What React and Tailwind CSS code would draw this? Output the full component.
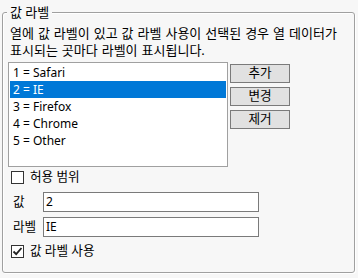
import React from "react";

const F = { fontFamily: '"Noto Sans", "Noto Sans CJK KR", sans-serif' };

function Check({ checked }) {
  return (
    <div className="w-[13px] h-[13px] border border-[#333333] bg-white flex items-center justify-center shrink-0">
      {checked && (
        <svg width="11" height="11" viewBox="0 0 11 11">
          <path d="M1.5 5.5 L4.2 8.2 L9.5 2" fill="none" stroke="#222" strokeWidth="1.8" />
        </svg>
      )}
    </div>
  );
}

export default function App() {
  const items = ["1 = Safari", "2 = IE", "3 = Firefox", "4 = Chrome", "5 = Other"];
  return (
    <div className="w-[358px] h-[278px] bg-[#f7f7f7] text-[12px] text-black overflow-hidden pt-[12px] pl-[2px]" style={F}>
      <div className="relative w-[353px] h-[261px] border border-[#a0a0a0] rounded-[3px] shadow-[inset_1px_1px_0_#ffffff,1px_1px_0_#ffffff]">
        <div className="absolute left-[4px] top-[-10px] px-[3px] bg-[#f7f7f7] leading-[18px] text-[13px]">값 라벨</div>
        <div className="flex flex-col">
          <div className="pl-[7px] mt-[12px] leading-[17px] text-[13px] [word-spacing:0.6px]">
            <div className="whitespace-nowrap">열에 값 라벨이 있고 값 라벨 사용이 선택된 경우 열 데이터가</div>
            <div>표시되는 곳마다 라벨이 표시됩니다.</div>
          </div>
          <div className="flex mt-[3px] pl-[5px]">
            <div className="w-[220px] h-[105px] border border-[#a0a0a0] bg-white p-[1px]">
              {items.map((t, i) => (
                <div
                  key={t}
                  className={
                    "h-[17px] leading-[17px] pl-[3px] " +
                    (i === 1 ? "bg-[#0078d7] text-white" : "")
                  }
                >
                  {t}
                </div>
              ))}
            </div>
            <div className="flex flex-col gap-[4px] ml-[2px] mt-[2px] text-[12.6px]">
              {["추가", "변경", "제거"].map((b) => (
                <div
                  key={b}
                  className="w-[60px] h-[19px] border border-[#7a7a7a] bg-[#e1e1e1] flex items-center justify-center leading-none"
                >
                  {b}
                </div>
              ))}
            </div>
          </div>
          <div className="flex items-center gap-[6px] pl-[8px] mt-[4px] h-[13px] text-[12.6px]">
            <Check />
            <span>허용 범위</span>
          </div>
          <div className="flex items-center pl-[10px] mt-[8px] h-[20px]">
            <span className="w-[30px] text-[12.6px]">값</span>
            <div className="w-[216px] h-[20px] border border-[#7a7a7a] bg-white flex items-center pl-[2px]">2</div>
          </div>
          <div className="flex items-center pl-[10px] mt-[5px] h-[20px]">
            <span className="w-[30px] text-[12.6px]">라벨</span>
            <div className="w-[216px] h-[20px] border border-[#7a7a7a] bg-white flex items-center pl-[2px]">IE</div>
          </div>
          <div className="flex items-center gap-[6px] pl-[8px] mt-[8px] h-[13px] text-[12.6px]">
            <Check checked />
            <span>값 라벨 사용</span>
          </div>
        </div>
      </div>
    </div>
  );
}
